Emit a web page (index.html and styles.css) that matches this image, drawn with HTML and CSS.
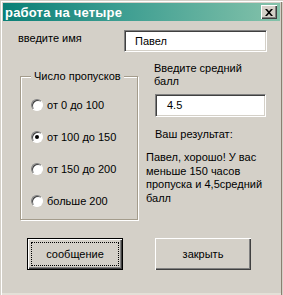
FILE: index.html
```html
<!DOCTYPE html>
<html lang="ru">
<head>
<meta charset="utf-8">
<title>работа на четыре</title>
<link rel="stylesheet" href="styles.css">
</head>
<body>
<div class="window">
  <div class="titlebar">
    <span class="title">работа на четыре</span>
    <span class="close">
      <svg width="8" height="7" viewBox="0 0 8 7"><path d="M0 0h2l2 2.2L6 0h2L5 3.5 8 7H6L4 4.8 2 7H0l3-3.5z" fill="#000"/></svg>
    </span>
  </div>
  <div class="name-row">
    <span class="label">введите имя</span>
    <div class="field field-name">Павел</div>
  </div>
  <div class="main">
    <div class="left">
      <div class="group">
        <span class="legend">Число пропусков</span>
        <div class="radio"><span class="dot"></span><span>от 0 до 100</span></div>
        <div class="radio"><span class="dot on"></span><span>от 100 до 150</span></div>
        <div class="radio"><span class="dot"></span><span>от 150 до 200</span></div>
        <div class="radio"><span class="dot"></span><span>больше 200</span></div>
      </div>
      <div class="btn default"><span class="focus">сообщение</span></div>
    </div>
    <div class="right">
      <div class="label-avg">Введите средний балл</div>
      <div class="field field-avg">4.5</div>
      <div class="label-res">Ваш результат:</div>
      <div class="result">Павел, хорошо! У вас меньше 150 часов пропуска и 4,5средний балл</div>
      <div class="btn close-btn"><span>закрыть</span></div>
    </div>
  </div>
</div>
</body>
</html>
```
FILE: styles.css
```css
html, body {
  margin: 0;
  padding: 0;
  background: #d4d0c8;
}
body {
  font-family: "Liberation Sans", Arial, sans-serif;
  font-size: 11px;
  color: #000;
}
.window {
  position: relative;
  width: 283px;
  height: 295px;
  box-sizing: border-box;
  padding: 3px 3px 0 3px;
  background: #d4d0c8;
  box-shadow: inset 1px 1px 0 #d4d0c8, inset 2px 2px 0 #fff, inset -1px 0 0 #d4d0c8, inset -2px 0 0 #8a8070, inset 0 -2px 0 #e4e0d8;
}
.titlebar {
  height: 18px;
  width: 277px;
  display: flex;
  align-items: center;
  justify-content: space-between;
  background: linear-gradient(to right, #0a7f76 0%, #3a9c90 40%, #84c2aa 100%);
  color: #fff;
}
.title {
  font-weight: bold;
  font-size: 13px;
  padding-left: 2px;
  letter-spacing: 0.2px;
}
.close {
  width: 16px;
  height: 14px;
  box-sizing: border-box;
  margin-right: 3px;
  background: #d4d0c8;
  display: flex;
  align-items: center;
  justify-content: center;
  box-shadow: inset 1px 1px 0 #fff, inset -1px -1px 0 #404040, inset -2px -2px 0 #808080;
}
.name-row {
  display: flex;
  align-items: flex-start;
  height: 35px;
  padding-top: 9px;
  box-sizing: border-box;
}
.label {
  margin-left: 15px;
  line-height: 13px;
  margin-top: 2px;
}
.field {
  background: #fff;
  box-sizing: border-box;
  border: 1px solid;
  border-color: #808080 #fff #fff #808080;
  box-shadow: inset 1px 1px 0 #404040, inset -1px -1px 0 #d4d0c8;
  line-height: 20px;
}
.field-name {
  margin-left: auto;
  margin-right: 13px;
  width: 143px;
  height: 22px;
  padding-left: 10px;
}
.main {
  display: flex;
}
.left {
  width: 140px;
  display: flex;
  flex-direction: column;
}
.group {
  position: relative;
  margin-top: 20px;
  margin-left: 17px;
  width: 118px;
  height: 144px;
  box-sizing: border-box;
  border: 1px solid #a49c8c;
  box-shadow: 1px 1px 0 #fff, inset 1px 1px 0 #fff;
  padding-top: 22px;
  padding-left: 10px;
  display: flex;
  flex-direction: column;
  gap: 20px;
}
.legend {
  position: absolute;
  top: -7px;
  left: 10px;
  padding: 0 3px;
  background: #d4d0c8;
  line-height: 13px;
}
.radio {
  display: flex;
  align-items: center;
  gap: 4px;
  height: 12px;
}
.dot {
  width: 12px;
  height: 12px;
  border-radius: 50%;
  box-sizing: border-box;
  background: #fff;
  border: 1px solid;
  border-color: #808080 #fff #fff #808080;
  box-shadow: inset 1px 1px 0 #404040;
  display: flex;
  align-items: center;
  justify-content: center;
}
.dot.on::after {
  content: "";
  width: 4px;
  height: 4px;
  border-radius: 50%;
  background: #000;
}
.btn {
  width: 96px;
  height: 32px;
  box-sizing: border-box;
  background: #d4d0c8;
  display: flex;
  align-items: center;
  justify-content: center;
  line-height: 13px;
  box-shadow: inset 1px 1px 0 #fff, inset -1px -1px 0 #404040, inset -2px -2px 0 #808080;
}
.btn.default {
  margin-top: 18px;
  margin-left: 24px;
  border: 1px solid #000;
  box-shadow: inset 1px 1px 0 #fff, inset -1px -1px 0 #404040, inset -2px -2px 0 #808080;
  padding: 3px;
}
.focus {
  flex: 1;
  align-self: stretch;
  display: flex;
  align-items: center;
  justify-content: center;
  border: 1px dotted #000;
}
.right {
  width: 122px;
  margin-left: 3px;
  display: flex;
  flex-direction: column;
}
.label-avg {
  margin-top: 6px;
  padding-left: 8px;
  width: 100px;
  line-height: 13px;
}
.field-avg {
  margin-top: 6px;
  margin-left: 9px;
  width: 111px;
  height: 23px;
  padding-left: 11px;
  line-height: 21px;
}
.label-res {
  margin-top: 11px;
  padding-left: 9px;
  line-height: 13px;
}
.result {
  margin-top: 10px;
  line-height: 13.5px;
  width: 122px;
}
.close-btn {
  margin-top: 33px;
  margin-left: 9px;
}
```
